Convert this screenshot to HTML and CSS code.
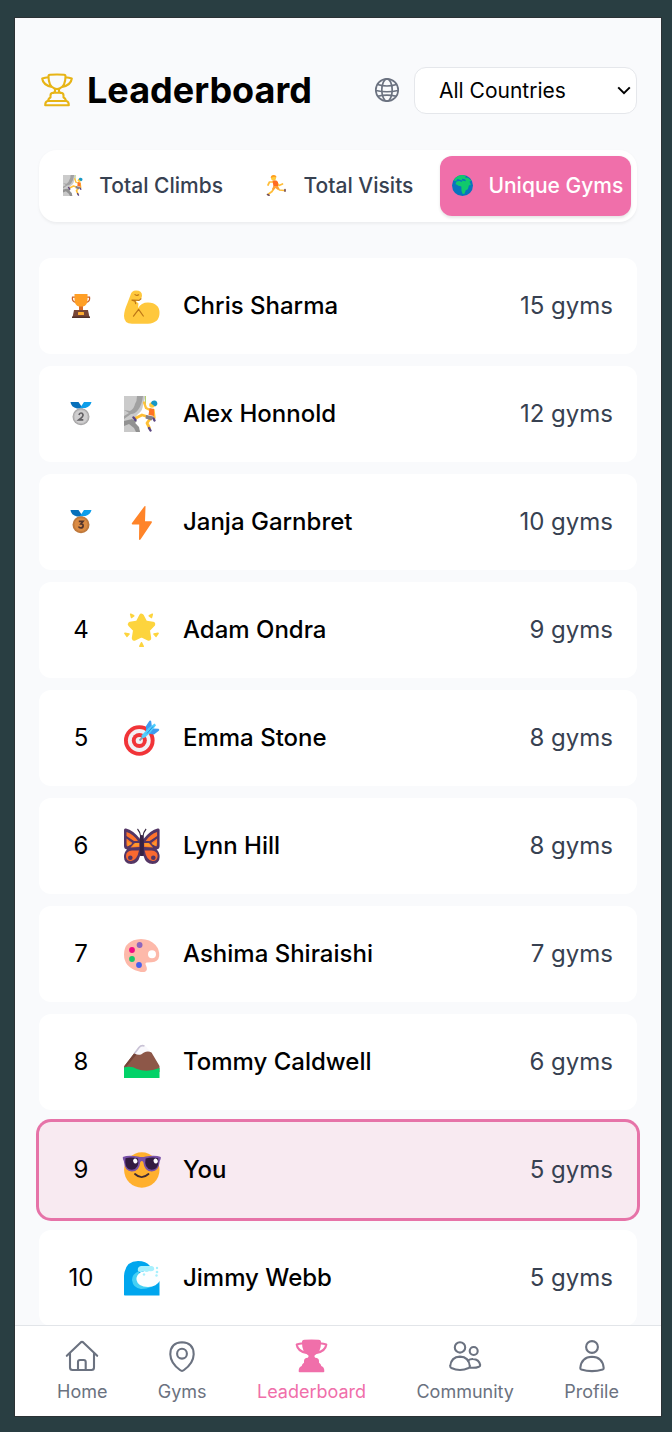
FILE: index.html
```html
<!DOCTYPE html>
<html lang="en">
<head>
<meta charset="utf-8">
<title>Leaderboard</title>
<link rel="stylesheet" href="styles.css">
</head>
<body>
<svg class="defs" width="0" height="0" aria-hidden="true">
  <symbol id="climber" viewBox="0 0 36 36">
    <path fill="#cbcbcb" d="M0 0h21c0 4-1 6-2 8 0 5-2 8-5 10l-3 4-11 4z"/>
    <path fill="#a1a1a1" d="M13 0h6q-1 9-5 14-3 4-7 4l-7 5v-3l5-3-5-3 6 1q4-2 5-7 2-3 2-8z"/>
    <path fill="#c9c9c9" d="M0 25l9-1 4 5 3 7H0z"/>
    <path fill="#919191" d="M0 25l8-2 5 2-2 2 4 4 1 5h-4l-2-4-5-4-5 2z"/>
    <path d="M21.500 0v13" stroke="#b5d06a" stroke-width="1"/>
    <path d="M26 14l-4-2-2-5.500M29.500 14l1 8" fill="none" stroke="#ffc23c" stroke-width="2.300" stroke-linecap="round" stroke-linejoin="round"/>
    <path d="M23 20.500l-5-1.500-7 3.500M26 23l-3 4 2.500 5" fill="none" stroke="#ffbf35" stroke-width="2.800" stroke-linecap="round" stroke-linejoin="round"/>
    <circle cx="28" cy="9" r="2.800" fill="#ffca3c"/>
    <path fill="#1698c6" d="M27 7.500c0-3 4-4 6-1.500 1 2 0 4-2 4.500z"/>
    <path fill="#ff7425" d="M25.500 12l4.500 1v7l-5.500-1z"/>
    <path fill="#858187" d="M22 19l7.500 1.500-2 4-6-2z"/>
    <path d="M9.500 21.500l2 2.500M25 32l1.500 2.500M29.500 22.500l1 2" stroke="#5b4681" stroke-width="2.400" stroke-linecap="round"/>
  </symbol>
  <symbol id="cup" viewBox="0 0 36 36">
    <path d="M9.500 4.500Q9.400 3 11 2.800q7-.7 14 0 1.600.2 1.500 1.700Q26.400 14 21 16.200q-3 1.500-6 0Q9.600 14 9.500 4.500ZM9.500 5.200Q6 5.500 3.200 6.500 4 13 13 15M26.500 5.200q3.500.3 6.300 1.300Q32 13 23 15M15.800 16.700q1 2.800-1.100 4.100M20.200 16.700q-1 2.800 1.100 4.100M11.500 25.500v-2q0-2.700 2.700-2.700h7.600q2.700 0 2.700 2.700v2q2.300.8 2.300 3.500H9.200q0-2.700 2.300-3.500ZM8.500 29h19q2.300.7 2.300 4.300H6.200Q6.200 29.700 8.500 29Z"/>
  </symbol>
</svg>
<div class="phone">
  <main class="page">
    <header class="header">
      <h1 class="title">
        <svg class="icon gold" viewBox="0 0 36 36"><use href="#cup"/></svg>
        <span>Leaderboard</span>
      </h1>
      <div class="filter">
        <svg class="globe" viewBox="0 0 26 26"><circle cx="13" cy="13" r="11.200"/><ellipse cx="13" cy="13" rx="5.200" ry="11.200"/><path d="M3.500 7.500q9.500 3 19 0M2 13.500q11 2.500 22 0M3.800 19.300q9.200-2.500 18.400 0"/></svg>
        <div class="select"><span>All Countries</span>
          <svg class="chevron" viewBox="0 0 14 9"><path d="M1.200 1.400 7 7.200l5.800-5.800"/></svg>
        </div>
      </div>
    </header>

    <div class="tabs">
      <div class="tab"><svg class="tab-emoji" viewBox="0 0 21 21"><use href="#climber" width="21" height="21"/></svg><span>Total Climbs</span></div>
      <div class="tab"><svg class="tab-emoji shifted" viewBox="0 0 21 21">
        <path d="M7.500 7 3.500 7 2 10M10 6.500l3 4 3.500-1.500M8 13l-2 3.500-3.500 2.500M11 12.500l2.500 2.500 5 .5" fill="none" stroke="#ffbd38" stroke-width="1.700" stroke-linecap="round" stroke-linejoin="round"/>
        <path fill="#ff6b22" d="M6.500 5.500q4-1 5.500 1.500V12H7.500z"/><path fill="#ffa035" d="M7.500 11H12l1.500 3-2 .8-2-1.800-2 2.500-1.500-1.500z"/>
        <circle cx="7.500" cy="3" r="2.500" fill="#ffca3c"/><path fill="#ff9d1f" d="M4.700 3q0-3 3-3t2.700 2.500L8 1.800z"/><path d="M1.500 19.500l1.500.8M19 14.500v1.700" stroke="#704b55" stroke-width="1.600" stroke-linecap="round"/></svg><span>Total Visits</span></div>
      <div class="tab active"><svg class="tab-emoji" viewBox="0 0 21 21">
        <circle cx="10.500" cy="10.500" r="10.500" fill="#0874be"/><path fill="#10c96c" d="M1.500 5.500Q5 0 11 .1l3 1-1 1.500 3 .2 3.500 3-2 .7 1.500 3.500-2 .3-1.200 4-2 1-1.300 3.500-1.800.2-1.200-3-.2-4.500-2.800-.8L3.500 9l1-2.500 3-.5 2 1 1-1.300L8 4.800 5.500 4 4 6z"/><path d="M10 5.500l4 .8-1-2-3-.5" fill="#0874be"/></svg><span>Unique Gyms</span></div>
    </div>

    <div class="list">
      <div class="row">
        <div class="rank"><svg class="medal" viewBox="0 0 24 24"><path d="M6 3.200H3.500Q2.500 7.500 7 8.500M18 3.200h2.500Q21.500 7.500 17 8.500" fill="none" stroke="#c9632a" stroke-width="1.300"/><path fill="#ff9f25" d="M5.500 0h13v5q0 7-4.500 7.500v3h-4v-3Q5.500 12 5.500 5z"/><path fill="#d86b27" d="M10 12.500h4v4h-4z"/><path fill="#764637" d="M5 16h14l1.500 7.500h-17z"/><path fill="#503029" d="M3 22.500h18V24H3z"/><rect x="9" y="18" width="6" height="3" rx=".6" fill="#ffae32"/></svg></div>
        <svg class="avatar" viewBox="0 0 36 36"><path fill="#ffc83d" d="M6.500 7Q7.500 2.700 12 2.500q6 0 6 5 0 3.500-3.500 4.500l-3 .8 3 2.700-.5 4.700q3-5.700 10-5.700Q35.500 15 35.500 25T24 35.700H8Q0 35.700 0 28 0 23 3.500 15z"/><path d="M8 12l7 .4 2-1.600M8 12.200l3 1 .7 2.500M11 6.600q2 1.600 3.600.2M14.600 21.300 9.500 28.200M14.600 21.300 19.300 28" fill="none" stroke="#bd7616" stroke-width="1.200" stroke-linecap="round"/></svg>
        <span class="name">Chris Sharma</span><span class="score">15 gyms</span>
      </div>
      <div class="row">
        <div class="rank"><svg class="medal" viewBox="0 0 24 24"><path fill="#0870ba" d="M1.500 0H9.500l4.500 6.500H8Q2 5 1.500 0z"/><path fill="#0d9eea" d="M22.500 0H15L11 6h5.500q5-1.500 6-6z"/><circle cx="12" cy="14.700" r="8.500" fill="#a7a6a7"/><circle cx="12" cy="14.700" r="7" fill="#cfcecf" stroke="#bdbcbd"/><path d="M10 13q.4-2 2-2t2 1.800-4 5h4.300" fill="none" stroke="#626064" stroke-width="1.700"/></svg></div>
        <svg class="avatar" viewBox="0 0 36 36"><use href="#climber"/></svg>
        <span class="name">Alex Honnold</span><span class="score">12 gyms</span>
      </div>
      <div class="row">
        <div class="rank"><svg class="medal" viewBox="0 0 24 24"><path fill="#0870ba" d="M1.500 0H9.500l4.500 6.500H8Q2 5 1.500 0z"/><path fill="#0d9eea" d="M22.500 0H15L11 6h5.500q5-1.500 6-6z"/><circle cx="12" cy="14.700" r="8.500" fill="#bd783d"/><circle cx="12" cy="14.700" r="7" fill="#db8b43" stroke="#c67c3c"/><path d="M9.800 11.300h4.200l-2.100 2.600q2.400 0 2.200 2.100-.3 1.900-2.300 1.900-1.600 0-2.200-1.400" fill="none" stroke="#53342d" stroke-width="1.700"/></svg></div>
        <svg class="avatar" viewBox="0 0 36 36"><path fill="#ff8429" d="M20.500 2.200Q21.700 1.500 21.500 3L21 17.300h6.200q1.200.3.500 1.500L16.500 35.500q-1.500 1.200-1.500-.6l.2-14.400H8.700q-1.500-.2-.7-1.600z"/></svg>
        <span class="name">Janja Garnbret</span><span class="score">10 gyms</span>
      </div>
      <div class="row">
        <div class="rank">4</div>
        <svg class="avatar" viewBox="0 0 36 36"><g fill="#fdd43d" stroke="#fdd43d" stroke-linejoin="round"><path stroke-width="5" d="M17.500 4.200 21 11l7.700 1.300-5.300 5.500 1.300 8.400-7.200-3.400-7.200 3.400 1.300-8.400-5.300-5.500L14 11z"/><path stroke-width="1.600" d="M6.700 2.300l3 1.500-2.100 1.700zM28.300 2.300l-3 1.500 2.100 1.700zM.9 21.300l4.100.7-2 2.300zM34.100 21.300l-4.100.7 2 2.300zM17.500 30.800l1.700 3.500h-3.400z"/></g></svg>
        <span class="name">Adam Ondra</span><span class="score">9 gyms</span>
      </div>
      <div class="row">
        <div class="rank">5</div>
        <svg class="avatar" viewBox="0 0 36 36"><circle cx="15.300" cy="20.500" r="15.300" fill="#f13438"/><circle cx="15.300" cy="20.500" r="11.400" fill="#f2f0f4"/><circle cx="15.300" cy="20.500" r="7.500" fill="#f13438"/><circle cx="15.300" cy="20.500" r="3.600" fill="#f2f0f4"/><path d="M15.500 20.500l6-6" stroke="#899aaa" stroke-width="1.800"/><path fill="#3e9df0" d="M22 6 25.500.8q1.200-.8 1.700.5L28 7.500l-6 6zM29 8.500l5.500.2q1.500.8.3 2L30 14.500l-7-1z"/><path fill="#50cdfc" d="M17.500 15.500 24 8.500l6.500-5 1.500 1.700-5.500 7.300-5.500 5q-4 1.500-3.500-2z"/><path d="M23 13.500l6-7" stroke="#258fdc" stroke-width="1"/></svg>
        <span class="name">Emma Stone</span><span class="score">8 gyms</span>
      </div>
      <div class="row">
        <div class="rank">6</div>
        <svg class="avatar" viewBox="0 0 36 36"><g id="wing"><path fill="#543665" d="M17 12Q9 2 2 .6 0 0 0 2v16q0 3 3 3.500Q0 24 0 29q0 6.500 7 7 7 0 9-8h2V12z"/><path fill="#ff742c" d="M2.500 4Q9 6 14 13l-4 0-7.500-5zM2.500 10.500l6 4.500-5 3.500q-1-.3-1-2zM10 15.500l5.500-.5v4l-9 .5z"/><path fill="#fb6930" d="M15 22.500q-2 10-8 10.500-5 0-5-5Q2 23 8 22.500z"/><path fill="#ff982b" d="M3 13l5 3-4 2zM11 15h4v3l-7 1z"/><circle cx="6.300" cy="29.700" r="2.300" fill="#543665"/></g><use href="#wing" transform="matrix(-1 0 0 1 35.600 0)"/><path d="M16.800 9q-.5-5-3.300-8M18.800 9q.5-5 3.300-8" fill="none" stroke="#33253d" stroke-width="1.100"/><rect x="15.800" y="7" width="4" height="21" rx="2" fill="#372245"/></svg>
        <span class="name">Lynn Hill</span><span class="score">8 gyms</span>
      </div>
      <div class="row">
        <div class="rank">7</div>
        <svg class="avatar" viewBox="0 0 36 36"><path fill="#fdb9aa" d="M17 3q9 0 14.500 6 4.300 5 3.700 11-.8 6-7.500 6.300l-4.700.2q-2.500.4-1 3 2 4.300-.5 6-2.500 1.300-7-.3Q0 31.500 0 18.500 0 4 17 3z"/><circle cx="28" cy="18.300" r="4" fill="#fff"/><circle cx="15.600" cy="9" r="2.900" fill="#8c67bd"/><circle cx="8" cy="14" r="2.900" fill="#f00c82"/><circle cx="8" cy="23" r="2.900" fill="#16c967"/><circle cx="15" cy="29" r="2.900" fill="#4560ed"/></svg>
        <span class="name">Ashima Shiraishi</span><span class="score">7 gyms</span>
      </div>
      <div class="row">
        <div class="rank">8</div>
        <svg class="avatar" viewBox="0 0 36 36"><path fill="#f9f8fc" d="M10 10l5-7q2-2.500 6.500-1l6 7v4H10z"/><path fill="none" stroke="#c9c2d5" stroke-width="1.700" d="M10.500 9.500 15 3.500Q17 1 20.500 2"/><path fill="#8d5748" d="M0 22.500 10 9.500q4 2 7 1l3-2q4-2 7.500 0L35.500 22v6L18 31 0 27z"/><path d="M10 9.500 0 22.500h2.500l10-12z" fill="#754439"/><path fill="#02d268" d="M0 23.500q7-2 13 1.500 10 4 22.500-1V34H0z"/></svg>
        <span class="name">Tommy Caldwell</span><span class="score">6 gyms</span>
      </div>
      <div class="row you">
        <div class="rank">9</div>
        <svg class="avatar" viewBox="0 0 36 36"><circle cx="17.800" cy="18" r="17.700" fill="#ffb02e"/><path d="M11 22q6.500 6.200 13.500 0" fill="none" stroke="#402a32" stroke-width="1.800" stroke-linecap="round"/><path fill="#7951a8" d="M-1.200 5Q4 2.800 14 4.500q4 1.200 7.600 0Q31.600 2.800 36.800 5q.3 2.300-1 4-1 10.500-8 10.500-7.500 0-8.500-9.500-1.500-2-3 0-1 9.500-8.500 9.500-7 0-8-10.500-1.200-1.700-1-4z"/><path fill="#321b41" d="M1.500 6.200q6-1.500 12.500.3 2 10-6 11.300Q0 17.500 1.500 6.200zM34.100 6.200q-6-1.500-12.500.3-2 10 6 11.300Q35.600 17.500 34.100 6.200z"/><g fill="#fff"><ellipse cx="11.300" cy="9" rx="2.100" ry="2.500" transform="rotate(-25 11.300 9)"/><ellipse cx="31.700" cy="9" rx="2.100" ry="2.500" transform="rotate(-25 31.700 9)"/></g></svg>
        <span class="name">You</span><span class="score">5 gyms</span>
      </div>
      <div class="row">
        <div class="rank">10</div>
        <svg class="avatar" viewBox="0 0 36 36"><path fill="#00a6ee" d="M0 16Q1 1 14 1q8 0 12 5l-8 7q-3 14 9 13 5-1 8.500-5v14.500H.8Q0 35.500 0 34.500z"/><path fill="#45d0f4" d="M15 11Q8 14 8 20q1 8 9 9 12 0 15-7l-6 2H16z"/><path fill="#fcfeff" d="M17 12q-5 3-4.500 8 1.500 7 11.500 7 9-.5 11.500-6L35 15l-3-5h-5z"/><g fill="#a8f0fd"><path d="M14 11q-1-4 3-5l11 0q3 1 2 4-2 2-5 1-2 2-5 0-4 2-6 0z"/><circle cx="20" cy="14.500" r="1.200"/><circle cx="33" cy="8" r="1.200"/><circle cx="32.500" cy="15.500" r="1.200"/><circle cx="33" cy="12" r="1.300"/></g></svg>
        <span class="name">Jimmy Webb</span><span class="score">5 gyms</span>
      </div>
    </div>
  </main>

  <nav class="nav">
    <div class="nav-item"><svg class="icon" viewBox="0 0 36 36"><path d="M2.800 17.800 16.700 4.400q1.300-1.100 2.600 0L33.200 17.800M6 15v14.500Q6 32 8.500 32h19q2.500 0 2.500-2.500V15M14 32v-8q0-2 2-2h3.700q2 0 2 2v8"/></svg><span>Home</span></div>
    <div class="nav-item"><svg class="icon" viewBox="0 0 36 36"><path d="M18 4.200q11.500.3 11.700 12Q29.500 25 20 32q-2 1.600-4 0Q6.500 25 6.300 16.200 6.500 4.500 18 4.200Z"/><circle cx="18" cy="15.700" r="4.900"/></svg><span>Gyms</span></div>
    <div class="nav-item current"><svg class="icon" viewBox="0.500 0 36 36"><use href="#cup" width="36" height="36"/><path class="solid" stroke="none" d="M9.500 3h17q0 11-5.500 13.500l-1 .7q-.3 2.500 1.500 3.600 3 0 3 4.700 2 1 2.300 3.500 3 .5 3 4.300H6.200q0-3.800 3-4.300.3-2.500 2.300-3.500 0-4.700 3-4.700 1.800-1.100 1.500-3.600l-1-.7Q9.500 14 9.500 3Z"/></svg><span>Leaderboard</span></div>
    <div class="nav-item"><svg class="icon" viewBox="0 0 36 36"><circle cx="13" cy="9.400" r="5.200"/><path d="M3.200 28q1-9.200 9.800-9.400 8.800.2 9.800 9.400.2 1.300-1.200 2-8.600 4-17.200 0-1.400-.7-1.200-2Z"/><circle cx="26.700" cy="13" r="4"/><path d="M21 22.500q2.300-1.700 5-1.500 6 .2 7.200 6 .2 1.300-1.200 1.700-4 1.600-9 .9"/></svg><span>Community</span></div>
    <div class="nav-item"><svg class="icon" viewBox="0 0 36 36"><circle cx="18" cy="9" r="5.900"/><path d="M6.300 30q1.200-11 11.700-11.200Q28.500 19 29.700 30q.1 1-1 1.400-10.700 3.400-21.400 0-1.100-.4-1-1.400Z"/></svg><span>Profile</span></div>
  </nav>
</div>
</body>
</html>
```
FILE: styles.css
```css
* {
  box-sizing: border-box;
}

body {
  margin: 0;
  height: 1432px;
  padding: 18px 11px 16px 15px;
  background: #293e42;
  color: #000;
  font-family: Inter, "Liberation Sans", sans-serif;
  overflow: hidden;
}

.defs {
  display: block;
}

.phone {
  display: flex;
  flex-direction: column;
  height: 1398px;
  background: #f9fafc;
  box-shadow: 0 0 0 1px #2b3235;
}

.page {
  flex: 1;
  min-height: 0;
  overflow: hidden;
  padding: 48px 24px 0;
}

.header {
  display: flex;
  align-items: center;
  justify-content: space-between;
  height: 48px;
  margin-bottom: 36px;
}

.title {
  display: flex;
  align-items: center;
  gap: 12px;
  margin: 0;
  font-size: 36px;
  font-weight: 700;
  line-height: 48px;
}

.icon {
  display: block;
  width: 36px;
  height: 36px;
  fill: none;
  stroke: currentColor;
  stroke-width: 2.1;
  stroke-linecap: round;
  stroke-linejoin: round;
}

.gold {
  color: #e7b416;
}

.solid {
  fill: currentColor;
}

.filter {
  display: flex;
  align-items: center;
  gap: 14px;
}

.globe {
  width: 26px;
  height: 26px;
  fill: none;
  stroke: #6b7280;
  stroke-width: 1.7;
}

.select {
  display: flex;
  align-items: center;
  justify-content: space-between;
  width: 223px;
  height: 47px;
  margin-top: 1px;
  padding: 0 5px 0 24px;
  border: 1px solid #e5e7eb;
  border-radius: 12px;
  background: #fff;
  font-size: 21px;
}

.chevron {
  width: 14px;
  height: 9px;
  fill: none;
  stroke: #000;
  stroke-width: 2;
}

.tabs {
  display: grid;
  grid-template-columns: repeat(3, 1fr);
  gap: 6px;
  height: 72px;
  margin-bottom: 36px;
  padding: 6px;
  border-radius: 18px;
  background: #fff;
  box-shadow: 0 1.5px 3px rgba(0, 0, 0, 0.05);
}

.tab {
  display: flex;
  align-items: center;
  justify-content: center;
  padding-bottom: 1px;
  border-radius: 12px;
  color: #374151;
  font-size: 21px;
  font-weight: 500;
  white-space: nowrap;
}

.tab-emoji {
  flex: none;
  width: 21px;
  height: 21px;
  margin: 0 15px 0 5px;
}

.shifted {
  margin: 0 17px 0 3px;
}

.active {
  background: #f06faa;
  box-shadow: 0 1.5px 3px rgba(0, 0, 0, 0.1);
  color: #fff;
}

.list {
  display: flex;
  flex-direction: column;
  gap: 12px;
}

.row {
  display: flex;
  flex: none;
  align-items: center;
  height: 96px;
  padding: 0 24px;
  border-radius: 12px;
  background: #fff;
  font-size: 24px;
  line-height: 36px;
}

.you {
  background: #f8eaf1;
  box-shadow: 0 0 0 3px #e673a8;
}

.rank {
  display: flex;
  justify-content: center;
  width: 36px;
}

.medal {
  width: 24px;
  height: 24px;
}

.avatar {
  flex: none;
  width: 36px;
  height: 36px;
  margin: 0 23px 0 25px;
  overflow: visible;
}

.name {
  flex: 1;
  font-weight: 500;
}

.score {
  color: #374151;
}

.nav {
  display: flex;
  flex: none;
  justify-content: space-between;
  height: 91px;
  padding: 12px 42px 0;
  border-top: 1px solid #e2e5e9;
  background: #fff;
}

.nav-item {
  display: flex;
  flex-direction: column;
  align-items: center;
  gap: 4px;
  color: #6b7280;
  font-size: 18px;
  line-height: 27px;
}

.current {
  color: #f06faa;
}
```
